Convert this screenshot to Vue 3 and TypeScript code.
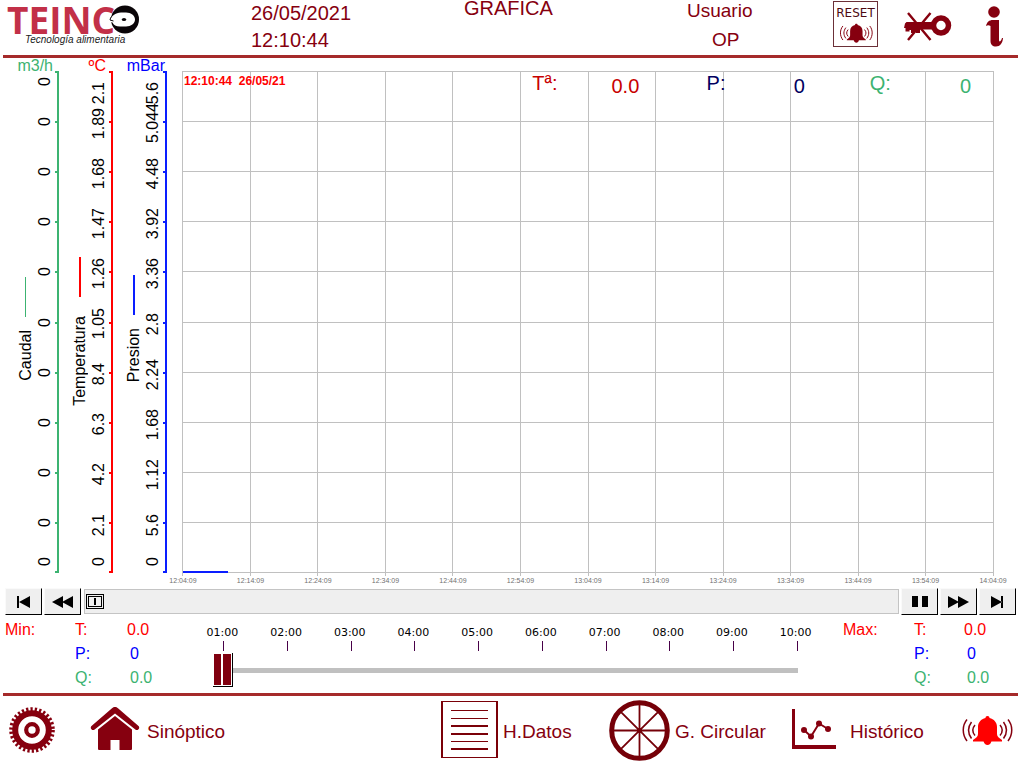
<script setup lang="ts">
import { ref } from 'vue'

interface Axis {
  id: string
  unit: string
  name: string
  color: string
  ticks: string[]
}

interface Reading {
  id: string
  label: string
  value: string
}

const axes: Axis[] = [
  { id: 'flow', unit: 'm3/h', name: 'Caudal', color: '#3cb371', ticks: ['0', '0', '0', '0', '0', '0', '0', '0', '0', '0', '0'] },
  { id: 'temp', unit: 'ºC', name: 'Temperatura', color: '#ff0000', ticks: ['2.1', '1.89', '1.68', '1.47', '1.26', '1.05', '8.4', '6.3', '4.2', '2.1', '0'] },
  { id: 'pres', unit: 'mBar', name: 'Presion', color: '#0a1eff', ticks: ['5.6', '5.044', '4.48', '3.92', '3.36', '2.8', '2.24', '1.68', '1.12', '5.6', '0'] },
]

const times: string[] = [
  '12:04:09', '12:14:09', '12:24:09', '12:34:09', '12:44:09', '12:54:09', '13:04:09',
  '13:14:09', '13:24:09', '13:34:09', '13:44:09', '13:54:09', '14:04:09',
]

const live: Reading[] = [
  { id: 'temp', label: 'Tª:', value: '0.0' },
  { id: 'pres', label: 'P:', value: '0' },
  { id: 'flow', label: 'Q:', value: '0' },
]

const limits: Reading[] = [
  { id: 'temp', label: 'T:', value: '0.0' },
  { id: 'pres', label: 'P:', value: '0' },
  { id: 'flow', label: 'Q:', value: '0.0' },
]

const hours: string[] = ['01:00', '02:00', '03:00', '04:00', '05:00', '06:00', '07:00', '08:00', '09:00', '10:00']

// Eleven horizontal divisions spread over the plot height
const rows: number[] = Array.from({ length: 11 }, (_, i) => Math.round((i * 501) / 10))

const scroll = ref(0)
const span = ref(1)
</script>

<template>
  <div class="screen">
    <svg class="defs" width="0" height="0" aria-hidden="true">
      <symbol id="bell" viewBox="0 0 52 32">
        <path d="M26.500 1c1.300 0 2 .8 2 2C33 4 36 7.500 36 12v7c0 2.500 2 4 5 6v1.500H12V25c3-2 5-3.500 5-6v-7c0-4.500 3-8 7.500-9 0-1.200.7-2 2-2z" fill="currentColor" />
        <path d="M22.500 26h8c-.6 2.700-2 4-4 4s-3.400-1.300-4-4z" fill="currentColor" />
        <g fill="none" class="waves" stroke-width="1.500">
          <path d="M6 4.500c-5 6-5 15 0 21.500M10.500 7c-4 5.500-4 11 0 16.500M14 10c-3 3.500-3 7 0 10.500" />
          <path d="M47 4.500c5 6 5 15 0 21.500M42.500 7c4 5.500 4 11 0 16.500M39 10c3 3.500 3 7 0 10.500" />
        </g>
      </symbol>
    </svg>

    <header class="top">
      <div class="logo">
        <svg width="134" height="46" viewBox="0 0 134 46" role="img" aria-label="TEINCO Tecnología alimentaria">
          <text x="0" y="34" class="logo-name">TEINC</text>
          <circle cx="118" cy="19.500" r="14" fill="#0a0508" />
          <path d="M114 12.500h5c5 0 9 3 9 7s-4 7-9 7h-6c-4 0-6.500-1.500-7.500-4l-3-1c1.500-5.500 6-9 11.500-9z" fill="#fff" />
          <path d="M104.500 16.500c-.8 1-1.200 2-1.500 3.500l3.500 1" fill="none" stroke="#0a0508" stroke-width="1" />
          <ellipse cx="117" cy="19.500" rx="2.200" ry="1.600" fill="#0a0508" />
          <text x="18" y="43" class="logo-tag">Tecnología alimentaria</text>
        </svg>
      </div>
      <div class="clock">
        <div>26/05/2021</div>
        <div>12:10:44</div>
      </div>
      <h1 class="title">GRAFICA</h1>
      <div class="user">
        <div>Usuario</div>
        <div class="user-role">OP</div>
      </div>
      <button class="reset" type="button">
        <span>RESET</span>
        <svg width="34" height="21"><use href="#bell" /></svg>
      </button>
      <button class="plain key" type="button" aria-label="Cerrar sesión">
        <svg width="48" height="30" viewBox="0 0 48 30">
          <circle cx="37" cy="13.500" r="7.500" fill="none" stroke="#86000f" stroke-width="5.500" />
          <path d="M1 11.500 2.500 10H29v7.500H16V21h-4v-1.500h-1.500V21H7v-3H5.500v1.500H1.500V16H0z" fill="#86000f" />
          <path d="M4 1 26.500 28M26.500 1 4 28" stroke="#86000f" stroke-width="2.400" />
        </svg>
      </button>
      <button class="plain info" type="button" aria-label="Información">
        <svg width="18" height="42" viewBox="0 0 18 42">
          <circle cx="9" cy="6" r="5.800" fill="#86000f" />
          <path d="M1 20c1-4 3-6 7-6h6v19.500c0 3.500 2 2 3-1.500h1c-.5 5.500-3 8.500-7 8.500-3.500 0-5.500-2-5.500-5.500V20c-1.500-1-3-1-4.500 0z" fill="#86000f" />
        </svg>
      </button>
    </header>

    <main>
      <section class="chart">
        <div v-for="a in axes" :key="a.id" class="axis" :class="a.id">
          <div class="unit">{{ a.unit }}</div>
          <div class="axis-body">
            <div class="axis-name">
              <i class="legend"></i>
              <span class="vertical">{{ a.name }}</span>
            </div>
            <div class="axis-labels">
              <div v-for="(t, i) in a.ticks" :key="i">
                <span class="vertical">{{ t }}</span>
              </div>
            </div>
            <svg class="axis-line" width="4" height="502" shape-rendering="crispEdges" aria-hidden="true">
              <rect x="2" y="0" width="2" height="502" :fill="a.color" />
              <rect v-for="(y, i) in rows" :key="i" x="0" :y="i === 10 ? 500 : y" width="3" height="2" :fill="a.color" />
            </svg>
          </div>
        </div>

        <div class="plot-wrap">
          <div class="plot">
            <svg class="grid" width="100%" height="502" shape-rendering="crispEdges" aria-hidden="true">
              <rect v-for="y in rows" :key="'h' + y" x="0" :y="y" width="100%" height="1" fill="#c0c0c0" />
              <rect v-for="i in 13" :key="'v' + i" :x="((i - 1) * 100) / 12 + '%'" y="0" width="1" height="505" fill="#c0c0c0" />
              <line x1="1" x2="5.700%" y1="501" y2="501" stroke="#0a1eff" stroke-width="2" />
            </svg>
            <div class="stamp">12:10:44&nbsp; 26/05/21</div>
            <div class="live">
              <template v-for="r in live" :key="r.id">
                <span :class="'live-' + r.id">{{ r.label }}</span>
                <span class="live-value" :class="'live-' + r.id">{{ r.value }}</span>
              </template>
            </div>
          </div>
          <div class="times">
            <span v-for="t in times" :key="t">{{ t }}</span>
          </div>
        </div>
      </section>

      <section class="player">
        <button type="button" aria-label="Inicio">
          <svg width="14" height="14" viewBox="0 0 14 14"><path d="M0 1h2v12H0zM13 1v12L2 7z" /></svg>
        </button>
        <button type="button" aria-label="Retroceder">
          <svg width="22" height="14" viewBox="0 0 22 14"><path d="M11 1v12L0 7zM21 1v12L10 7z" /></svg>
        </button>
        <input v-model.number="scroll" class="scroll" type="range" min="0" max="100" aria-label="Posición" />
        <button type="button" aria-label="Pausa">
          <svg width="16" height="14" viewBox="0 0 16 14"><path d="M0 1h6v11H0zM10 1h6v11h-6z" /></svg>
        </button>
        <button type="button" aria-label="Avanzar">
          <svg width="22" height="14" viewBox="0 0 22 14"><path d="M0 1v12l11-6zM10 1v12l11-6z" /></svg>
        </button>
        <button type="button" aria-label="Final">
          <svg width="14" height="14" viewBox="0 0 14 14"><path d="M0 1v12l11-6zM10 1h2v12h-2z" /></svg>
        </button>
      </section>

      <section class="stats">
        <div class="limits">
          <template v-for="(r, i) in limits" :key="r.id">
            <span class="c-temp">{{ i === 0 ? 'Min:' : '' }}</span>
            <span :class="'c-' + r.id">{{ r.label }}</span>
            <span class="limit-value" :class="'c-' + r.id">{{ r.value }}</span>
          </template>
        </div>
        <div class="span">
          <div class="hours">
            <span v-for="h in hours" :key="h">{{ h }}</span>
          </div>
          <input v-model.number="span" class="slider" type="range" min="1" max="10" aria-label="Horas" />
        </div>
        <div class="limits limits-max">
          <template v-for="(r, i) in limits" :key="r.id">
            <span class="c-temp">{{ i === 0 ? 'Max:' : '' }}</span>
            <span :class="'c-' + r.id">{{ r.label }}</span>
            <span class="limit-value" :class="'c-' + r.id">{{ r.value }}</span>
          </template>
        </div>
      </section>
    </main>

    <nav class="bottom">
      <button class="plain" type="button" aria-label="Ajustes">
        <svg width="46" height="46" viewBox="0 0 46 46" fill="none" stroke="#86000f">
          <circle cx="23" cy="23" r="16.800" stroke-width="6" />
          <circle cx="23" cy="23" r="20.800" stroke-width="4" stroke-dasharray="2.256 2.100" />
          <circle cx="23" cy="23" r="5.800" stroke-width="4.200" />
        </svg>
      </button>
      <a href="#sinoptico">
        <svg width="50" height="46" viewBox="0 0 50 46" fill="#86000f">
          <path d="M25 0c1.200 0 2 .5 3 1.300L48.500 19c1.500 1.300.5 4-1.500 4-1 0-1.500-.4-2.300-1L25 6.500 5.300 22c-.8.6-1.300 1-2.300 1-2 0-3-2.700-1.500-4L22 1.300C23 .5 23.800 0 25 0z" />
          <path d="M25 9 42 22.500v19c0 1-.5 1.500-1.500 1.500H29.500V33h-9v10h-11C8.500 43 8 42.500 8 41.500v-19z" />
        </svg>
        <span>Sinóptico</span>
      </a>
      <a href="#datos" class="tight">
        <svg width="57" height="58" viewBox="0 0 57 58" fill="none" stroke="#7a0008" shape-rendering="crispEdges">
          <path d="M0 .5h57M0 56.500h57" />
          <path d="M1 0v57M56 0v57" stroke-width="2" />
          <path d="M10 9.500h37M10 17.500h37M10 40.500h37" />
          <path d="M10 25h37M10 33h37M10 48h37" stroke-width="2" />
        </svg>
        <span>H.Datos</span>
      </a>
      <a href="#circular" class="tight">
        <svg width="61" height="61" viewBox="0 0 61 61" fill="none" stroke="#750008">
          <circle cx="30.500" cy="30.500" r="27.800" stroke-width="5" />
          <path d="M30.500 4v53M4 30.500h53M11.800 11.800l37.400 37.400M49.200 11.800 11.800 49.200" stroke-width="1.800" />
          <circle cx="30.500" cy="30.500" r="1.500" stroke-width="2" />
        </svg>
        <span>G. Circular</span>
      </a>
      <a href="#historico" class="wide">
        <svg width="44" height="42" viewBox="0 0 44 42">
          <path d="M0 0h3v36h41v4H0z" fill="#86000f" />
          <path d="M12 21l7 6.500 8-13 9 5.500" fill="none" stroke="#86000f" stroke-width="2" />
          <g fill="#86000f">
            <circle cx="12" cy="21" r="3" />
            <circle cx="19" cy="27.500" r="3" />
            <circle cx="27" cy="14.500" r="3" />
            <circle cx="36" cy="20" r="3" />
          </g>
        </svg>
        <span>Histórico</span>
      </a>
      <button class="plain alarm" type="button" aria-label="Alarmas">
        <svg width="52" height="32"><use href="#bell" /></svg>
      </button>
    </nav>
  </div>
</template>

<style>
body {
  margin: 0;
  background: #fff;
}
</style>

<style scoped>
.screen {
  min-height: 100vh;
  box-sizing: border-box;
  font-family: 'Liberation Sans', Arial, sans-serif;
  color: #86000f;
}

.defs {
  position: absolute;
}

svg {
  display: block;
  flex: none;
}

button {
  font: inherit;
  color: inherit;
  padding: 0;
  cursor: pointer;
}

.plain {
  border: 0;
  background: none;
  display: flex;
  align-items: center;
}

.top {
  display: grid;
  grid-template-columns: 243fr 214fr 223fr 146fr 71fr 81fr 33fr;
  align-items: start;
  height: 55px;
  margin: 0 3px;
  padding-left: 4px;
  border-bottom: 3px solid #a52a2a;
}

.top > * {
  min-width: 0;
}

.logo-name {
  font: 700 37px 'Open Sans', sans-serif;
  fill: #c23048;
}

.logo-tag {
  font: italic 10px 'Liberation Sans', Arial, sans-serif;
  fill: #222;
}

.logo svg {
  overflow: visible;
}

.clock {
  padding-left: 1px;
  font-size: 20px;
  line-height: 27px;
}

.title {
  margin: 0;
  font-size: 20px;
  font-weight: 400;
  line-height: 16px;
}

.user {
  display: flex;
  flex-direction: column;
  align-items: center;
  justify-self: start;
  gap: 7px;
  font-size: 19px;
  line-height: 22px;
}

.user-role {
  padding-left: 12px;
}

.reset {
  display: flex;
  flex-direction: column;
  align-items: center;
  gap: 3px;
  width: 45px;
  height: 46px;
  margin-top: 1px;
  padding-top: 4px;
  box-sizing: border-box;
  border: 1px solid #6b3038;
  background: #fff;
}

.reset span {
  font: 12px/14px 'DejaVu Sans', Verdana, sans-serif;
  color: #4d0a12;
}

.waves {
  stroke: #86000f;
}

.key {
  margin-top: 12px;
}

.info {
  margin-top: 6px;
}

.chart {
  display: flex;
  padding-left: 5px;
  height: 530px;
}

.axis {
  flex: none;
  width: 54px;
}

.unit {
  height: 13px;
  font-size: 16px;
  line-height: 15px;
  text-align: right;
  white-space: nowrap;
}

.flow .unit {
  padding-right: 6px;
  color: #3cb371;
}

.temp .unit {
  padding-right: 7px;
  color: #ff0000;
}

.pres .unit {
  padding-right: 2px;
  color: #0000ff;
}

.axis-body {
  display: flex;
  justify-content: flex-end;
  height: 502px;
  color: #000;
  font-size: 16px;
}

.vertical {
  writing-mode: vertical-rl;
  transform: rotate(180deg);
  line-height: 18px;
  white-space: nowrap;
}

.axis-name {
  display: flex;
  flex-direction: column;
  align-items: center;
  justify-content: center;
  gap: 13px;
  padding: 14px 1px 0 0;
}

.temp .axis-name {
  gap: 19px;
  padding-top: 18px;
}

.legend {
  width: 2px;
  height: 40px;
}

.flow .legend {
  width: 1px;
  margin-right: 1px;
  background: #3cb371;
}

.temp .legend {
  background: #ff0000;
}

.pres .legend {
  background: #0a1eff;
}

.axis-labels {
  display: grid;
  grid-template-rows: minmax(0, 1fr) repeat(9, minmax(0, 2fr)) minmax(0, 1fr);
  padding-right: 1px;
}

.axis-labels div {
  display: flex;
  align-items: center;
  padding-top: 4px;
}

.flow .axis-labels div {
  padding-top: 0;
}

.axis-labels div:first-child {
  align-items: flex-start;
  padding-top: 11px;
}

.flow .axis-labels div:first-child {
  padding-top: 6px;
}

.axis-labels div:last-child {
  align-items: flex-end;
  padding-bottom: 7px;
}

.plot-wrap {
  flex: 1;
  min-width: 0;
  margin: 13px 28px 0 15px;
}

.plot {
  position: relative;
}

.grid {
  overflow: visible;
}

.stamp {
  position: absolute;
  top: 3px;
  left: 2px;
  font-size: 12px;
  font-weight: 700;
  line-height: 14px;
  color: #ff0000;
}

.live {
  position: absolute;
  inset: 0;
  display: grid;
  grid-template-columns: 79fr 95fr 87fr 76fr 90fr 33fr;
  align-items: start;
  padding-left: 43.2%;
  font-size: 20px;
  line-height: 24px;
}

.live-value {
  padding-top: 3px;
}

.live-temp {
  color: #c80000;
}

.live-pres {
  color: #000060;
}

.live-flow {
  color: #3cb371;
}

.times {
  display: grid;
  grid-template-columns: repeat(13, 1fr);
  margin: 4px calc(-100% / 24) 0;
  padding-left: 1px;
  font-size: 7px;
  line-height: 8px;
  text-align: center;
  color: #707070;
}

.player {
  display: flex;
  gap: 2px;
  height: 27px;
  padding: 0 5px;
}

.player button {
  display: flex;
  align-items: center;
  justify-content: center;
  flex: none;
  width: 37px;
  box-sizing: border-box;
  border: 1px solid;
  border-color: #fafafa #000 #000 #fafafa;
  background: #efefef;
}

.scroll {
  appearance: none;
  flex: 1;
  min-width: 0;
  box-sizing: border-box;
  height: 25px;
  margin: 1px 0 0 1px;
  padding: 0 1px;
  border: 1px solid #c4c4c4;
  background: #efefef;
}

.scroll::-webkit-slider-thumb {
  appearance: none;
  width: 18px;
  height: 15px;
  border: 1px solid #000;
  background: linear-gradient(#000, #000) center / 2px 7px no-repeat #efefef;
  box-shadow: inset 0 0 0 1px #efefef, inset 0 0 0 2px #000;
}

.stats {
  display: grid;
  grid-template-columns: 192px 1fr 192px;
  height: 78px;
}

.limits {
  display: grid;
  grid-template-columns: 70px 52px 1fr;
  grid-template-rows: repeat(3, 24px);
  padding: 3px 0 0 5px;
  font-size: 16px;
  line-height: 24px;
}

.limits-max {
  grid-template-columns: 71px 50px 1fr;
  padding-left: 14px;
}

.c-temp {
  color: #ff0000;
}

.c-pres {
  color: #0000ff;
}

.c-flow {
  color: #3cb371;
}

.limit-value.c-pres,
.limit-value.c-flow {
  padding-left: 3px;
}

.span {
  padding-top: 12px;
}

.hours {
  display: grid;
  grid-template-columns: repeat(10, 1fr);
  font: 11px/12px 'DejaVu Sans', Verdana, sans-serif;
  text-align: center;
  text-indent: -3px;
  color: #000;
}

.hours span::after {
  content: '';
  display: block;
  width: 1px;
  height: 10px;
  margin: 2px auto 0;
  background: #480048;
}

.slider {
  appearance: none;
  display: block;
  box-sizing: border-box;
  width: calc(100% - 42px);
  height: 34px;
  margin: 2px 21px 0;
  background: linear-gradient(#c0c0c0, #c0c0c0) center / calc(100% - 20px) 5px no-repeat;
}

.slider::-webkit-slider-thumb {
  appearance: none;
  width: 20px;
  height: 34px;
  border: solid #000;
  border-width: 0 1px 1px 0;
  background: linear-gradient(90deg, #fff 1px, #80000f 1px 8px, #fff 8px 10px, #80000f 10px 18px, #fff 18px);
  box-shadow: inset 0 1px #fff, inset 0 -1px #fff;
}

.bottom {
  display: grid;
  grid-template-columns: 81fr 351fr 168fr 183fr 169fr 57fr;
  align-items: center;
  height: 64px;
  margin: 0 3px;
  padding: 2px 0 0 6px;
  border-top: 3px solid #a52a2a;
}

.bottom > * {
  min-width: 0;
}

.bottom a {
  display: flex;
  align-items: center;
  gap: 7px;
  color: inherit;
  font-size: 19px;
  line-height: 24px;
  text-decoration: none;
  white-space: nowrap;
}

.bottom a span {
  padding-top: 4px;
}

.bottom .tight {
  gap: 5px;
}

.bottom .wide {
  gap: 14px;
}

.alarm {
  padding-top: 2px;
  color: #ff0000;
}
</style>
